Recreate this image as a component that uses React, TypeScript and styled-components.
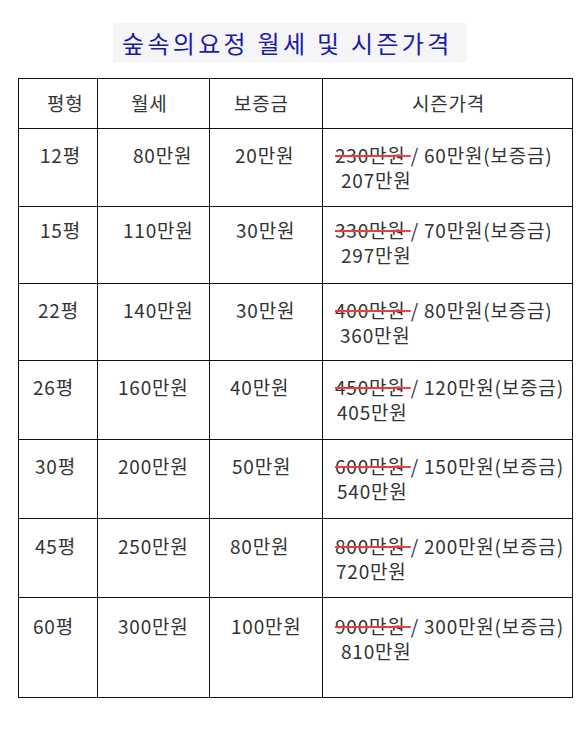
import styled, { createGlobalStyle } from 'styled-components';

type Row = {
  size: string;
  rent: string;
  deposit: string;
  oldPrice: string;
  seasonDeposit: string;
  seasonPrice: string;
  height: number;
  top: number;
  indents: [number, number, number, number];
};

const rows: Row[] = [
  { size: '12평', rent: '80만원', deposit: '20만원', oldPrice: '230만원', seasonDeposit: '60만원(보증금)', seasonPrice: '207만원', height: 78, top: 13, indents: [21, 35, 25, 18] },
  { size: '15평', rent: '110만원', deposit: '30만원', oldPrice: '330만원', seasonDeposit: '70만원(보증금)', seasonPrice: '297만원', height: 77, top: 10, indents: [21, 25, 26, 18] },
  { size: '22평', rent: '140만원', deposit: '30만원', oldPrice: '400만원', seasonDeposit: '80만원(보증금)', seasonPrice: '360만원', height: 77, top: 13, indents: [19, 25, 26, 17] },
  { size: '26평', rent: '160만원', deposit: '40만원', oldPrice: '450만원', seasonDeposit: '120만원(보증금)', seasonPrice: '405만원', height: 79, top: 13, indents: [14, 20, 20, 14] },
  { size: '30평', rent: '200만원', deposit: '50만원', oldPrice: '600만원', seasonDeposit: '150만원(보증금)', seasonPrice: '540만원', height: 79, top: 13, indents: [16, 20, 22, 14] },
  { size: '45평', rent: '250만원', deposit: '80만원', oldPrice: '800만원', seasonDeposit: '200만원(보증금)', seasonPrice: '720만원', height: 79, top: 14, indents: [16, 20, 20, 13] },
  { size: '60평', rent: '300만원', deposit: '100만원', oldPrice: '900만원', seasonDeposit: '300만원(보증금)', seasonPrice: '810만원', height: 100, top: 15, indents: [14, 20, 21, 18] },
];

const GlobalStyle = createGlobalStyle`
  html, body {
    margin: 0;
    padding: 0;
    background: #ffffff;
  }
  body {
    font-family: "Noto Sans CJK KR", "Noto Sans", sans-serif;
    color: #333333;
  }
`;

const Page = styled.div`
  width: 576px;
  display: flex;
  flex-direction: column;
  padding: 23px 0 0 18px;
  box-sizing: border-box;
`;

const TitleBar = styled.div`
  align-self: flex-start;
  margin-left: 95px;
  width: 354px;
  height: 39px;
  box-sizing: border-box;
  background: #f5f5f8;
  display: flex;
  align-items: center;
  padding-left: 9px;
`;

const Title = styled.h1`
  margin: 0;
  font-size: 24px;
  font-weight: 400;
  letter-spacing: 3.3px;
  color: #1a1aa8;
  line-height: 1;
`;

const Table = styled.table`
  margin-top: 16px;
  width: 554px;
  border-collapse: collapse;
  table-layout: fixed;
  font-size: 19px;
  letter-spacing: 0.8px;
  line-height: 25px;
  color: #333333;
`;

const HeadCell = styled.th<{ $indent: number }>`
  height: 47px;
  padding: 0 0 2px ${p => p.$indent}px;
  border: 1px solid #111;
  font-weight: 400;
  text-align: left;
  vertical-align: middle;
  white-space: nowrap;
`;

const BodyRow = styled.tr<{ $height: number }>`
  height: ${p => p.$height}px;
`;

const Cell = styled.td<{ $indent: number; $top: number }>`
  padding: ${p => p.$top}px 0 0 ${p => p.$indent}px;
  border: 1px solid #111;
  vertical-align: top;
  white-space: nowrap;
`;

const SeasonCell = styled.td<{ $top: number }>`
  padding: ${p => p.$top}px 0 0 12px;
  border: 1px solid #111;
  vertical-align: top;
  white-space: nowrap;
`;

const Struck = styled.span`
  text-decoration: line-through;
  text-decoration-color: #f23a3a;
  text-decoration-thickness: 2px;
`;

const SecondLine = styled.div<{ $indent: number }>`
  padding-left: ${p => p.$indent - 12}px;
`;

export default function App() {
  return (
    <>
      <GlobalStyle />
      <Page>
        <TitleBar>
          <Title>숲속의요정 월세 및 시즌가격</Title>
        </TitleBar>
        <Table>
          <colgroup>
            <col style={{ width: 79 }} />
            <col style={{ width: 112 }} />
            <col style={{ width: 113 }} />
            <col style={{ width: 250 }} />
          </colgroup>
          <thead>
            <tr>
              <HeadCell $indent={28}>평형</HeadCell>
              <HeadCell $indent={33}>월세</HeadCell>
              <HeadCell $indent={24}>보증금</HeadCell>
              <HeadCell $indent={89}>시즌가격</HeadCell>
            </tr>
          </thead>
          <tbody>
            {rows.map(r => (
              <BodyRow key={r.size} $height={r.height}>
                <Cell $indent={r.indents[0]} $top={r.top}>{r.size}</Cell>
                <Cell $indent={r.indents[1]} $top={r.top}>{r.rent}</Cell>
                <Cell $indent={r.indents[2]} $top={r.top}>{r.deposit}</Cell>
                <SeasonCell $top={r.top}>
                  <div>
                    <Struck>{r.oldPrice} </Struck>/ {r.seasonDeposit}
                  </div>
                  <SecondLine $indent={r.indents[3]}>{r.seasonPrice}</SecondLine>
                </SeasonCell>
              </BodyRow>
            ))}
          </tbody>
        </Table>
      </Page>
    </>
  );
}
